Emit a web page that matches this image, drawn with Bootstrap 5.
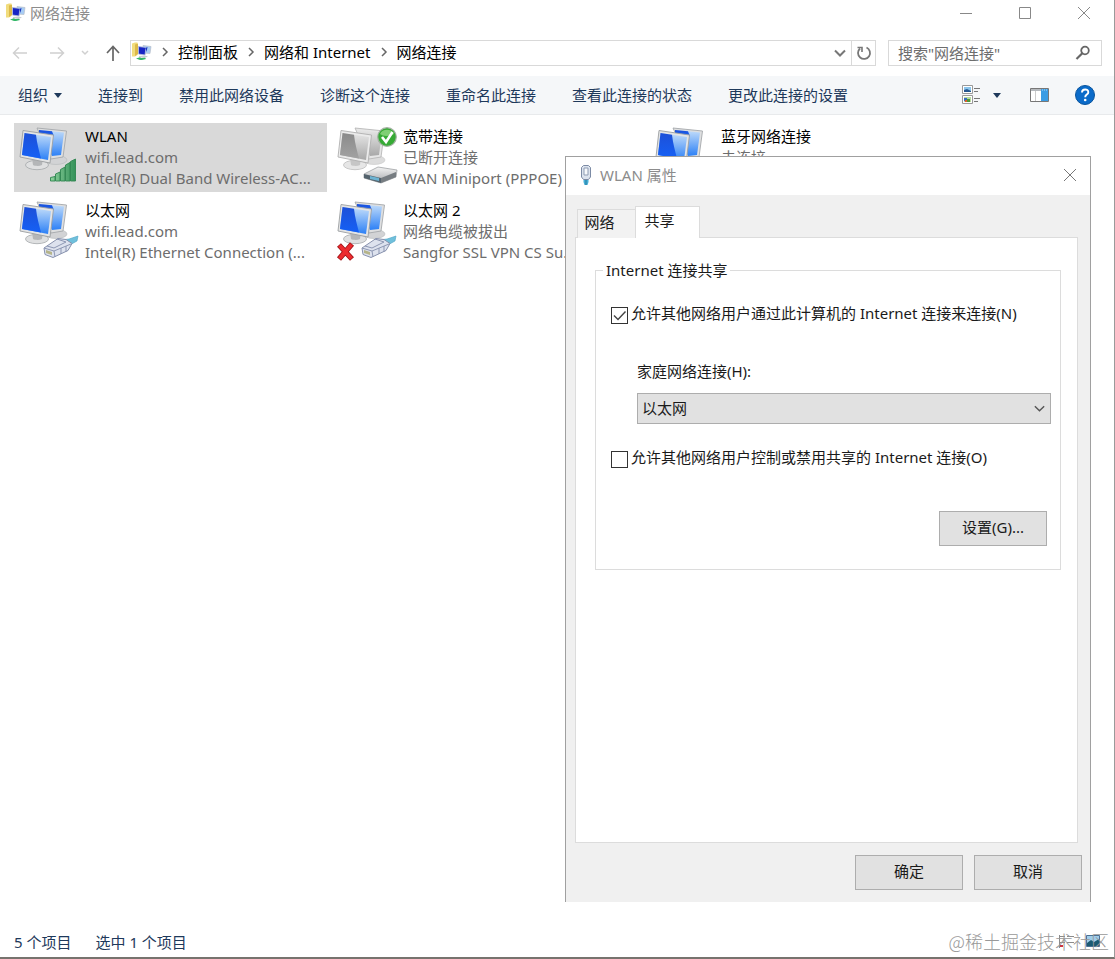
<!DOCTYPE html>
<html lang="zh-CN">
<head>
<meta charset="utf-8">
<meta name="viewport" content="width=device-width, initial-scale=1">
<title>网络连接</title>
<link href="https://cdn.jsdelivr.net/npm/bootstrap@5.3.0/dist/css/bootstrap.min.css" rel="stylesheet">
<style>
  body { font: 15px/21px "Noto Sans", "Noto Sans CJK SC", sans-serif; color: #000; background: #fff; }
  button { border: 0; background: none; padding: 0; color: inherit; font: inherit; }
  svg { display: block; flex: none; }
  .window { min-height: 100vh; border-right: 1px solid #9a9a9a; border-bottom: 2px solid #77736e; }
  .titlebar { height: 26px; padding: 0 24px 0 6px; color: #8c8c8c; }
  .win-controls { gap: 47px; }
  .address-row { height: 50px; padding: 14px 12px 10px; gap: 12px; }
  .history { width: 108px; margin-right: -2px; }
  .box { border: 1px solid #d9d9d9; height: 26px; }
  .crumbs { gap: 9px; padding: 0 0 2px 1px; }
  .crumbs a { color: #000; text-decoration: none; }
  .refresh { width: 24px; height: 24px; border-left: 1px solid #d9d9d9; }
  .search { width: 214px; }
  .search input { border: 0; outline: 0; padding: 0 0 0 9px; min-width: 0; color: #6d6d6d; }
  .search input::placeholder { color: #6d6d6d; opacity: 1; }
  .commands { height: 39px; padding: 0 19px 0 18px; gap: 36px; background: #f5f7f9; border-bottom: 1px solid #e8eaec; color: #1e395b; }
  .tri { width: 8px; height: 5px; border: 4px solid transparent; border-top: 5px solid #1e395b; border-bottom: 0; }
  .organize { gap: 6px; }
  .view { gap: 13px; margin-right: 29px; }
  .pane { margin-right: 26px; }
  .items { display: grid; grid-template-columns: repeat(auto-fill, 313px); gap: 5px; padding: 8px 14px; align-content: start; }
  .conn { height: 69px; padding-left: 2px; gap: 5px; }
  .conn.selected { background: #d9d9d9; }
  .conn-text { padding-top: 3px; color: #6d6d6d; white-space: nowrap; }
  .conn-text strong { font-weight: 400; color: #000; }
  .statusbar { height: 30px; padding: 0 14px; gap: 24px; color: #1e395b; }
  .watermark { right: 5px; bottom: 4px; font: 18px/24px "Noto Sans CJK SC", sans-serif; font-weight: 300; color: #999; }

  .dialog { left: 565px; top: 156px; width: 526px; border: 1px solid #a0a0a0; border-bottom: 0; background: #f0f0f0; color: #1a1a1a; }
  .dialog-title { height: 38px; padding: 0 14px 2px; background: #fff; color: #8c8c8c; }
  .dialog-body { padding: 11px 12px 12px 9px; }
  .tabs { padding-left: 2px; margin-bottom: -1px; }
  .tabs button { position: relative; border: 1px solid #dcdcdc; border-bottom: 0; background: #f2f2f2; height: 29px; width: 59px; padding: 0 14px 3px 0; }
  .tabs button.active { height: 32px; width: 65px; background: #fff; margin-left: -1px; padding: 0 16px 5px 0; }
  .panel { border: 1px solid #dcdcdc; background: #fff; height: 606px; padding: 22px 16px 0 19px; }
  .group { border: 1px solid #dcdcdc; padding: 22px 13px 23px 15px; }
  .group legend { font-size: 15px; line-height: 21px; float: none; width: auto; margin: 0 0 0 -8px; padding: 0 3px; }
  .tick { gap: 3px; }
  .tick .form-check-input { width: 17px; height: 17px; margin: 4px 0 0; border: 1px solid #333; border-radius: 0; background-color: #fff; box-shadow: none; }
  .tick .form-check-input:checked { background-image: url("data:image/svg+xml,%3Csvg xmlns='http://www.w3.org/2000/svg' viewBox='0 0 15 15'%3E%3Cpath d='M2 7.5l4 4L13.500 3.500' fill='none' stroke='%23444' stroke-width='1.400'/%3E%3C/svg%3E"); }
  .home { padding: 37px 0 23px 26px; margin-right: -4px; }
  .home .form-select { height: 31px; padding: 0 24px 1px 4px; margin-top: 11px; border: 1px solid #adadad; border-radius: 0; background-color: #e1e1e1; background-position: right 4px center; background-size: 13px; color: #1a1a1a; font-size: 15px; line-height: 21px; background-image: url("data:image/svg+xml,%3Csvg xmlns='http://www.w3.org/2000/svg' viewBox='0 0 14 14'%3E%3Cpath d='M2 4.500l5 5 5-5' fill='none' stroke='%23555' stroke-width='1.500'/%3E%3C/svg%3E"); }
  .push { width: 108px; height: 35px; padding-bottom: 2px; border: 1px solid #adadad; background: #e1e1e1; }
  .settings { margin-top: 43px; }
  .actions { gap: 11px; padding: 12px 0 0; margin-right: -4px; }
</style>
</head>
<body>
<svg width="0" height="0" class="position-absolute" aria-hidden="true">
  <defs>
    <linearGradient id="blueL" x1="0" y1="0" x2="0" y2="1"><stop offset="0" stop-color="#1d50d8"/><stop offset="1" stop-color="#1560f5"/></linearGradient>
    <linearGradient id="blueR" x1="0" y1="0" x2="0" y2="1"><stop offset="0" stop-color="#c4defa"/><stop offset="1" stop-color="#2c80f6"/></linearGradient>
    <linearGradient id="grayL" x1="0" y1="0" x2="0" y2="1"><stop offset="0" stop-color="#8a8a8a"/><stop offset="1" stop-color="#a2a2a2"/></linearGradient>
    <linearGradient id="grayR" x1="0" y1="0" x2="0" y2="1"><stop offset="0" stop-color="#e6e6e6"/><stop offset="1" stop-color="#a8a8a8"/></linearGradient>
    <linearGradient id="green" x1="0" y1="0" x2="1" y2="0"><stop offset="0" stop-color="#8fd19d"/><stop offset="1" stop-color="#35925a"/></linearGradient>
    <linearGradient id="metal" x1="0" y1="0" x2="0" y2="1"><stop offset="0" stop-color="#f4f4f4"/><stop offset="1" stop-color="#a4a7aa"/></linearGradient>
    <symbol id="pcs" viewBox="0 0 64 64">
      <ellipse cx="40" cy="37" rx="11" ry="4.500" fill="#d2d3d5" stroke="#b5b8bb" stroke-width=".6"/>
      <path d="M21 5l29.500 3-3.500 26-12 2z" fill="#dedfe0" stroke="#a5a8ab" stroke-width=".9"/>
      <path d="M23 7l25 2.500-3 22.500-9 1z" fill="url(#blueR)"/>
      <path d="M23 7l13 1.300 2 5-15-3z" fill="url(#blueL)"/>
      <ellipse cx="21" cy="42" rx="11.500" ry="4.700" fill="#dfe0e1" stroke="#a5a8ab" stroke-width=".8"/>
      <path d="M16 35h11l-1 7c-3 1.500-7 1-9 0z" fill="#b4b6b8"/>
      <path d="M7 7.500l30.500 4.500L34 40 4 34z" fill="#e3e4e5" stroke="#9c9fa2" stroke-width=".9"/>
      <path d="M8.500 10L35 14l-3 23-26-5z" fill="url(#blueR)"/>
      <path d="M8.500 10L20 11.700c1 9 3 16 5 23.800L6 32z" fill="url(#blueL)"/>
    </symbol>
    <symbol id="pcs-off" viewBox="0 0 64 64">
      <ellipse cx="40" cy="37" rx="11" ry="4.500" fill="#dcdcdc" stroke="#c8c8c8" stroke-width=".6"/>
      <path d="M21 5l29.500 3-3.500 26-12 2z" fill="#e6e6e6" stroke="#b8b8b8" stroke-width=".9"/>
      <path d="M23 7l25 2.500-3 22.500-9 1z" fill="url(#grayR)"/>
      <ellipse cx="21" cy="42" rx="11.500" ry="4.700" fill="#e6e6e6" stroke="#bcbcbc" stroke-width=".8"/>
      <path d="M16 35h11l-1 7c-3 1.500-7 1-9 0z" fill="#c6c6c6"/>
      <path d="M7 7.500l30.500 4.500L34 40 4 34z" fill="#ebebeb" stroke="#b0b0b0" stroke-width=".9"/>
      <path d="M8.500 10L35 14l-3 23-26-5z" fill="url(#grayR)"/>
      <path d="M8.500 10L20 11.700c1 9 3 16 5 23.800L6 32z" fill="url(#grayL)"/>
    </symbol>
    <symbol id="plug" viewBox="0 0 64 64">
      <path d="M45 43l8-1 9-3-1 5-9 5z" fill="#6fc0dc" stroke="#4da3c4" stroke-width=".6"/>
      <path d="M28 51l14-9.500 8 1 6 4-4 7-15 7-8-3z" fill="#dde2ee" stroke="#8791ad" stroke-width="1"/>
      <path d="M28 51l10 3 1 6M38 54l17-7M41 42l9 3-12 6-7-2M45 51v6M50 49v6" fill="none" stroke="#8d97b3" stroke-width="1"/>
      <path d="M30 53l6 2v3l-6-2z" fill="#b5b48a"/>
    </symbol>
    <symbol id="folder-net" viewBox="0 0 20 20">
      <path d="M0 1.500L3 .5h2.500V13L3 14.500H0z" fill="#f1dc7c"/>
      <path d="M3 2.500l3-1V12l-3 2z" fill="#dcb94a"/>
      <path d="M11 3.500l8 1-1 7-7-.5z" fill="#a8cdf4" stroke="#b9bec8" stroke-width=".7"/>
      <path d="M6.500 4.500l7.500 1-1 7.500-6.500-1z" fill="#1725c4" stroke="#b6bfdc" stroke-width=".8"/>
      <path d="M13.500 6l2-1-1 5z" fill="#1a36bd"/>
      <path d="M7 14l6-.5 3 1-3 1.200-6-.5z" fill="#c9ced2"/>
      <path d="M4 16.500l4-1.300 1 .8 4-.3 1 1.300-4 1H8z" fill="#34b768"/>
    </symbol>
    <symbol id="chev" viewBox="0 0 8 12"><path d="M2 2l4 4-4 4" fill="none" stroke="#666" stroke-width="1.500"/></symbol>
  </defs>
</svg>

<div class="window position-relative d-flex flex-column">
  <header class="titlebar d-flex align-items-center justify-content-between">
    <div class="d-flex align-items-center gap-1"><svg width="20" height="20"><use href="#folder-net"/></svg><span>网络连接</span></div>
    <div class="win-controls d-flex align-items-center">
      <button aria-label="最小化"><svg width="12" height="12"><path d="M0 6.500h12" stroke="#888"/></svg></button>
      <button aria-label="最大化"><svg width="12" height="12"><path d="M.5.5h11v11H.5z" fill="none" stroke="#888"/></svg></button>
      <button aria-label="关闭"><svg width="12" height="12"><path d="M0 0l12 12M12 0L0 12" stroke="#888"/></svg></button>
    </div>
  </header>

  <div class="address-row d-flex align-items-center">
    <div class="history d-flex align-items-center justify-content-between">
      <button aria-label="后退"><svg width="16" height="14"><path d="M15 7H1.500M7 1.500L1.500 7 7 12.500" fill="none" stroke="#d0d0d0" stroke-width="1.500"/></svg></button>
      <button class="ms-1" aria-label="前进"><svg width="16" height="14"><path d="M1 7h13.500M9 1.500L14.500 7 9 12.500" fill="none" stroke="#d0d0d0" stroke-width="1.500"/></svg></button>
      <button aria-label="最近浏览的位置"><svg width="8" height="6"><path d="M1 1l3 3 3-3" fill="none" stroke="#d0d0d0" stroke-width="1.500"/></svg></button>
      <button aria-label="向上"><svg width="14" height="16"><path d="M7 16V2M1 8l6-6.500L13 8" fill="none" stroke="#666" stroke-width="1.700"/></svg></button>
    </div>
    <nav class="box d-flex align-items-center flex-grow-1" aria-label="地址">
      <div class="crumbs d-flex align-items-center me-auto">
        <svg width="20" height="20"><use href="#folder-net"/></svg>
        <svg width="8" height="12"><use href="#chev"/></svg><a href="#">控制面板</a>
        <svg width="8" height="12"><use href="#chev"/></svg><a href="#">网络和 Internet</a>
        <svg width="8" height="12"><use href="#chev"/></svg><a href="#">网络连接</a>
      </div>
      <button class="me-1" aria-label="历史记录"><svg width="14" height="10"><path d="M2 2.500l5 5 5-5" fill="none" stroke="#777" stroke-width="2"/></svg></button>
      <button class="refresh d-flex align-items-center justify-content-center" aria-label="刷新"><svg width="16" height="16"><path d="M10.500 2.500A6 6 0 1 1 4 3.500" fill="none" stroke="#777" stroke-width="1.800"/><path d="M1.500 2.500H6V7" fill="none" stroke="#777" stroke-width="1.600"/></svg></button>
    </nav>
    <div class="search box d-flex align-items-center pe-2">
      <input class="flex-grow-1" type="text" placeholder='搜索"网络连接"' aria-label="搜索">
      <svg width="18" height="16"><circle cx="10" cy="5.500" r="3.800" fill="none" stroke="#666" stroke-width="1.800"/><path d="M7.300 8.300L1.500 14" stroke="#666" stroke-width="2.200"/></svg>
    </div>
  </div>

  <div class="commands d-flex align-items-center">
    <button class="organize d-flex align-items-center">组织 <span class="tri"></span></button>
    <button>连接到</button>
    <button>禁用此网络设备</button>
    <button>诊断这个连接</button>
    <button>重命名此连接</button>
    <button>查看此连接的状态</button>
    <button>更改此连接的设置</button>
    <div class="d-flex align-items-center ms-auto">
      <button class="view d-flex align-items-center" aria-label="更改视图">
        <svg width="18" height="20"><path d="M.5.5h10v8H.5zM.5 10.500h10v8H.5z" fill="#fff" stroke="#999"/><path d="M2 2h7v5H2z" fill="#8ac5ed"/><path d="M2 5l3-1 4 2v1H2z" fill="#25578f"/><path d="M2 12h7v5H2z" fill="#b8dba0"/><path d="M2 13h3v3H2z" fill="#376ac0"/><path d="M5 14h3v3H5z" fill="#4d9a35"/><path d="M3 15h2v2H3z" fill="#db5b30"/><path d="M12 3.500h6M12 6.500h4M12 13.500h6M12 16.500h4" stroke="#777"/></svg>
        <span class="tri"></span>
      </button>
      <button class="pane" aria-label="预览窗格"><svg width="19" height="14"><path d="M.5.5h18v13H.5z" fill="#fff" stroke="#777"/><path d="M1 1h17v2H1z" fill="#b5b9bd"/><path d="M5.500 3v10" stroke="#ccc"/><path d="M11 1h7v12h-7z" fill="#3a9ce4"/><path d="M12 2h5" stroke="#b8dcf5" stroke-dasharray="1 1"/></svg></button>
      <button aria-label="帮助"><svg width="20" height="20"><circle cx="10" cy="10" r="9.500" fill="#0b6bc9" stroke="#09549d"/><path d="M7 7.500c0-4 6.300-4 6.300-.3 0 2.500-3.100 2.300-3.100 5" fill="none" stroke="#fff" stroke-width="1.900"/><circle cx="10.200" cy="15" r="1.300" fill="#fff"/></svg></button>
    </div>
  </div>

  <main class="items flex-grow-1">
    <div class="conn selected d-flex">
      <svg width="64" height="64"><use href="#pcs"/><path d="M34.500 58v-3.500l4.500-1V58zM39.500 58v-7l4.500-2v9zM44.500 58V46.500l4.500-2.500v14zM49.500 58V42l4.500-2.500V58zM54.500 58V38.500l5-2.500v22z" fill="url(#green)" stroke="#2f8650" stroke-width=".9"/></svg>
      <div class="conn-text"><strong class="d-block">WLAN</strong><div>wifi.lead.com</div><div>Intel(R) Dual Band Wireless-AC...</div></div>
    </div>
    <div class="conn d-flex">
      <svg width="64" height="64"><use href="#pcs-off"/><path d="M30 51l14-7 19 3-1 7-15 6-17-5z" fill="url(#metal)" stroke="#94979a" stroke-width=".7"/><path d="M30 51l17 4v5l-17-5z" fill="#54636d"/><path d="M36 53l9 2v3l-9-2z" fill="#6cb3d2"/><path d="M47 55l15-6v5l-15 6z" fill="#777d82"/><circle cx="53" cy="14" r="9.300" fill="#36aa35" stroke="#a5b3a4" stroke-width="1.200"/><path d="M46 11a8 8 0 0 1 14 0c-4 2-10 3-14 0z" fill="#7fcf74"/><path d="M48 14l4 5 6.500-10" fill="none" stroke="#fff" stroke-width="2.600"/></svg>
      <div class="conn-text"><strong class="d-block">宽带连接</strong><div>已断开连接</div><div>WAN Miniport (PPPOE)</div></div>
    </div>
    <div class="conn d-flex">
      <svg width="64" height="64"><use href="#pcs"/></svg>
      <div class="conn-text"><strong class="d-block">蓝牙网络连接</strong><div>未连接</div></div>
    </div>
    <div class="conn d-flex">
      <svg width="64" height="64"><use href="#pcs"/><use href="#plug"/></svg>
      <div class="conn-text"><strong class="d-block">以太网</strong><div>wifi.lead.com</div><div>Intel(R) Ethernet Connection (...</div></div>
    </div>
    <div class="conn d-flex">
      <svg width="64" height="64"><use href="#pcs"/><use href="#plug"/><path d="M5 48l13 14M18 47L5 62" stroke="#9e1216" stroke-width="5.400"/><path d="M5.500 48.500l12 13M17.500 47.500l-12 14" stroke="#ec2b2f" stroke-width="3.800"/></svg>
      <div class="conn-text"><strong class="d-block">以太网 2</strong><div>网络电缆被拔出</div><div>Sangfor SSL VPN CS Su...</div></div>
    </div>
  </main>

  <footer class="statusbar position-relative d-flex align-items-center">
    <span>5 个项目</span><span>选中 1 个项目</span>
    <svg class="ms-auto" width="46" height="18" aria-hidden="true"><path d="M5.500 2v13M5 3.500h6M5 9.500h6M13 3.500h7M13 9.500h7" stroke="#8b8b8b" fill="none"/><path d="M6 12h3v2H6z" fill="#c34"/><path d="M32.500 2.500h13v11h-13z" fill="#9fcdea" stroke="#4b7193"/><path d="M33 10l4-3 3 2 5-3v7H33z" fill="#1c5a72"/></svg>
    <span class="watermark position-absolute">@稀土掘金技术社区</span>
  </footer>

  <section class="dialog position-absolute" role="dialog" aria-label="WLAN 属性">
    <div class="dialog-title d-flex align-items-center justify-content-between">
      <div class="d-flex align-items-center gap-2"><svg width="12" height="20"><path d="M1.500 2.500l2-2h5l2 2V12l-2 2.500h-5l-2-2.500z" fill="#dce3ee" stroke="#7c8ba5"/><path d="M4 3h4v7H4z" fill="#f7f9fc" stroke="#8f9db4"/><path d="M3.500 15h5v2l-1 3h-3l-1-3z" fill="#46aed6"/><path d="M6 15v5" stroke="#247b9e"/></svg><span>WLAN 属性</span></div>
      <button aria-label="关闭"><svg width="12" height="12"><path d="M0 0l12 12M12 0L0 12" stroke="#777"/></svg></button>
    </div>
    <div class="dialog-body">
      <div class="tabs d-flex align-items-end" role="tablist">
        <button role="tab">网络</button>
        <button role="tab" class="active" aria-selected="true">共享</button>
      </div>
      <div class="panel">
        <fieldset class="group">
          <legend>Internet 连接共享</legend>
          <div class="tick d-flex"><input class="form-check-input" type="checkbox" id="allow" checked><label for="allow">允许其他网络用户通过此计算机的 Internet 连接来连接(N)</label></div>
          <div class="home">
            <label for="home">家庭网络连接(H):</label>
            <select class="form-select" id="home"><option>以太网</option></select>
          </div>
          <div class="tick d-flex"><input class="form-check-input" type="checkbox" id="control"><label for="control">允许其他网络用户控制或禁用共享的 Internet 连接(O)</label></div>
          <div class="settings d-flex justify-content-end"><button class="push">设置(G)...</button></div>
        </fieldset>
      </div>
      <div class="actions d-flex justify-content-end"><button class="push">确定</button><button class="push">取消</button></div>
    </div>
  </section>
</div>
<script src="https://cdn.jsdelivr.net/npm/bootstrap@5.3.0/dist/js/bootstrap.bundle.min.js"></script>
</body>
</html>
